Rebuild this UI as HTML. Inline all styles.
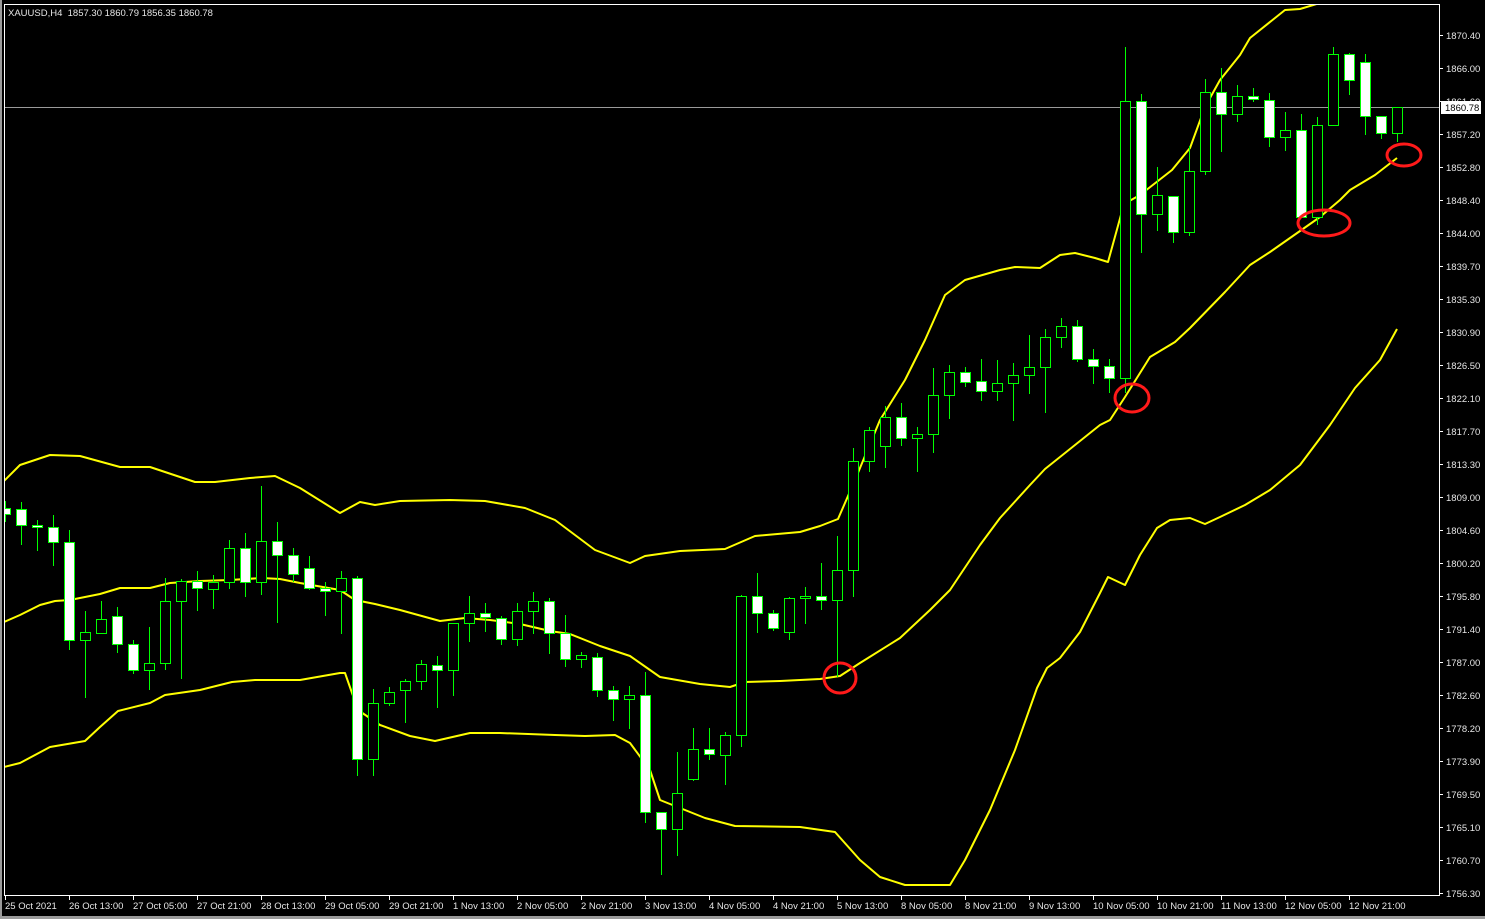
<!DOCTYPE html>
<html><head><meta charset="utf-8"><style>
html,body{margin:0;padding:0;background:#000;width:1485px;height:919px;overflow:hidden}
svg{display:block}
text{font-family:"Liberation Sans",sans-serif;font-size:9.5px;fill:#e6e6e6}
.w{fill:#fff;stroke:#00ff00;stroke-width:1}
.h{fill:#000;stroke:#00ff00;stroke-width:1}
</style></head><body>
<svg width="1485" height="919" viewBox="0 0 1485 919" xmlns="http://www.w3.org/2000/svg">
<rect x="0" y="0" width="1485" height="919" fill="#000"/>
<rect x="0" y="0" width="2" height="919" fill="#9a9a9a"/>
<rect x="0" y="916" width="1485" height="3" fill="#9a9a9a"/>
<defs><clipPath id="c"><rect x="5" y="5" width="1434" height="890"/></clipPath></defs>
<g clip-path="url(#c)">
<line x1="4" y1="107.5" x2="1439" y2="107.5" stroke="#9a9a9a" stroke-width="1"/>
<g fill="none" stroke="#ffff00" stroke-width="2" stroke-linejoin="round">
<polyline points="4,481 20,465 50,455 80,456 120,467 150,467 195,482 215,482 250,478 275,476 300,488 340,513 360,502 375,505 400,501 450,500 485,501 525,508 555,520 595,550 630,563 645,556 680,551 725,549 755,536 800,532 820,526 838,519 855,480 880,420 905,380 925,340 945,295 965,280 1000,270 1015,267 1040,268 1060,255 1075,253 1095,258 1108,262 1124,204 1140,195 1172,170 1190,148 1205,107 1220,80 1240,55 1250,38 1285,10 1300,9 1320,3"/>
<polyline points="4,622 20,615 40,605 55,601 70,600 100,594 120,588 150,588 170,583 200,581 230,580 262,578 280,579 300,583 340,590 355,600 375,604 400,610 440,621 465,618 490,620 520,624 550,631 570,634 600,646 630,656 660,677 700,684 730,687 745,682 780,681 820,679 840,676 860,663 900,638 930,610 950,590 980,545 1000,518 1030,485 1045,469 1075,445 1100,425 1110,420 1125,397 1150,357 1175,342 1190,328 1225,292 1250,265 1270,252 1300,231 1320,217 1340,200 1350,190 1375,175 1397,158"/>
<polyline points="4,767 20,763 50,747 85,741 100,727 118,711 150,703 165,695 200,690 232,682 255,680 300,680 340,673 345,673 358,710 380,725 410,736 435,741 470,733 500,733 555,735 585,736 615,735 630,743 650,770 660,800 670,804 705,818 735,826 800,827 835,832 860,860 880,877 905,885 950,885 965,860 990,810 1015,750 1037,688 1047,668 1060,658 1080,632 1100,593 1108,577 1125,585 1140,555 1157,528 1170,520 1190,518 1205,524 1220,517 1245,505 1270,490 1300,465 1330,425 1355,388 1380,360 1397,329"/>
</g>
<path stroke="#00ff00" stroke-width="1" fill="none" d="M5.5 501V522M21.5 502V545M37.5 520V551M53.5 515V566M69.5 530V650M85.5 611V698M101.5 601V633M117.5 607V653M133.5 640V674M149.5 627V690M165.5 578V670M181.5 579V679M197.5 571V611M213.5 575V609M229.5 540V589M245.5 533V597M261.5 486V595M277.5 522V623M293.5 548V582M309.5 556V590M325.5 582V616M341.5 571V634M357.5 576V776M373.5 689V776M389.5 687V706M405.5 679V723M421.5 660V690M437.5 656V708M453.5 623V696M469.5 596V642M485.5 603V632M501.5 616V645M517.5 603V646M533.5 592V634M549.5 598V654M565.5 615V667M581.5 652V668M597.5 653V697M613.5 686V721M629.5 686V729M645.5 672V823M661.5 812V875M677.5 752V856M693.5 728V781M709.5 728V760M725.5 732V785M741.5 595V747M757.5 573V633M773.5 610V631M789.5 597V640M805.5 587V624M821.5 563V610M837.5 536V677M853.5 448V597M869.5 427V472M885.5 406V468M901.5 403V446M917.5 427V472M933.5 368V453M949.5 365V419M965.5 367V387M981.5 359V401M997.5 360V401M1013.5 363V421M1029.5 335V394M1045.5 329V413M1061.5 318V348M1077.5 320V362M1093.5 349V384M1109.5 359V393M1125.5 47V393M1141.5 94V253M1157.5 167V231M1173.5 196V243M1189.5 146V236M1205.5 79V175M1221.5 68V152M1237.5 85V122M1253.5 88V102M1269.5 93V147M1285.5 112V151M1301.5 114V217M1317.5 117V225M1333.5 47V125M1349.5 53V95M1365.5 54V135M1381.5 116V139M1397.5 107V142"/>
<rect class="w" x="0.5" y="508.5" width="10" height="6"/>
<rect class="w" x="16.5" y="509.5" width="10" height="16"/>
<rect class="w" x="32.5" y="525.5" width="10" height="2"/>
<rect class="w" x="48.5" y="527.5" width="10" height="15"/>
<rect class="w" x="64.5" y="542.5" width="10" height="98"/>
<rect class="h" x="80.5" y="632.5" width="10" height="8"/>
<rect class="h" x="96.5" y="619.5" width="10" height="14"/>
<rect class="w" x="112.5" y="616.5" width="10" height="28"/>
<rect class="w" x="128.5" y="644.5" width="10" height="26"/>
<rect class="h" x="144.5" y="663.5" width="10" height="7"/>
<rect class="h" x="160.5" y="601.5" width="10" height="62"/>
<rect class="h" x="176.5" y="581.5" width="10" height="20"/>
<rect class="w" x="192.5" y="581.5" width="10" height="7"/>
<rect class="h" x="208.5" y="582.5" width="10" height="7"/>
<rect class="h" x="224.5" y="548.5" width="10" height="34"/>
<rect class="w" x="240.5" y="548.5" width="10" height="34"/>
<rect class="h" x="256.5" y="541.5" width="10" height="41"/>
<rect class="w" x="272.5" y="541.5" width="10" height="14"/>
<rect class="w" x="288.5" y="555.5" width="10" height="19"/>
<rect class="w" x="304.5" y="568.5" width="10" height="20"/>
<rect class="w" x="320.5" y="588.5" width="10" height="3"/>
<rect class="h" x="336.5" y="578.5" width="10" height="13"/>
<rect class="w" x="352.5" y="578.5" width="10" height="181"/>
<rect class="h" x="368.5" y="703.5" width="10" height="56"/>
<rect class="h" x="384.5" y="692.5" width="10" height="11"/>
<rect class="h" x="400.5" y="681.5" width="10" height="9"/>
<rect class="h" x="416.5" y="664.5" width="10" height="17"/>
<rect class="w" x="432.5" y="665.5" width="10" height="5"/>
<rect class="h" x="448.5" y="623.5" width="10" height="47"/>
<rect class="h" x="464.5" y="613.5" width="10" height="10"/>
<rect class="w" x="480.5" y="613.5" width="10" height="4"/>
<rect class="w" x="496.5" y="618.5" width="10" height="21"/>
<rect class="h" x="512.5" y="611.5" width="10" height="28"/>
<rect class="h" x="528.5" y="601.5" width="10" height="10"/>
<rect class="w" x="544.5" y="601.5" width="10" height="32"/>
<rect class="w" x="560.5" y="633.5" width="10" height="26"/>
<rect class="h" x="576.5" y="655.5" width="10" height="4"/>
<rect class="w" x="592.5" y="657.5" width="10" height="33"/>
<rect class="w" x="608.5" y="690.5" width="10" height="9"/>
<rect class="h" x="624.5" y="695.5" width="10" height="4"/>
<rect class="w" x="640.5" y="695.5" width="10" height="117"/>
<rect class="w" x="656.5" y="812.5" width="10" height="17"/>
<rect class="h" x="672.5" y="793.5" width="10" height="36"/>
<rect class="h" x="688.5" y="749.5" width="10" height="30"/>
<rect class="w" x="704.5" y="749.5" width="10" height="5"/>
<rect class="h" x="720.5" y="735.5" width="10" height="20"/>
<rect class="h" x="736.5" y="596.5" width="10" height="139"/>
<rect class="w" x="752.5" y="596.5" width="10" height="17"/>
<rect class="w" x="768.5" y="613.5" width="10" height="15"/>
<rect class="h" x="784.5" y="598.5" width="10" height="34"/>
<rect class="h" x="800.5" y="596.5" width="10" height="2"/>
<rect class="w" x="816.5" y="596.5" width="10" height="4"/>
<rect class="h" x="832.5" y="570.5" width="10" height="30"/>
<rect class="h" x="848.5" y="461.5" width="10" height="109"/>
<rect class="h" x="864.5" y="430.5" width="10" height="31"/>
<rect class="h" x="880.5" y="417.5" width="10" height="29"/>
<rect class="w" x="896.5" y="417.5" width="10" height="21"/>
<rect class="h" x="912.5" y="434.5" width="10" height="4"/>
<rect class="h" x="928.5" y="395.5" width="10" height="39"/>
<rect class="h" x="944.5" y="372.5" width="10" height="23"/>
<rect class="w" x="960.5" y="372.5" width="10" height="10"/>
<rect class="w" x="976.5" y="381.5" width="10" height="10"/>
<rect class="h" x="992.5" y="383.5" width="10" height="8"/>
<rect class="h" x="1008.5" y="375.5" width="10" height="8"/>
<rect class="h" x="1024.5" y="367.5" width="10" height="8"/>
<rect class="h" x="1040.5" y="337.5" width="10" height="30"/>
<rect class="h" x="1056.5" y="326.5" width="10" height="11"/>
<rect class="w" x="1072.5" y="326.5" width="10" height="33"/>
<rect class="w" x="1088.5" y="359.5" width="10" height="7"/>
<rect class="w" x="1104.5" y="366.5" width="10" height="12"/>
<rect class="h" x="1120.5" y="101.5" width="10" height="277"/>
<rect class="w" x="1136.5" y="101.5" width="10" height="113"/>
<rect class="h" x="1152.5" y="195.5" width="10" height="19"/>
<rect class="w" x="1168.5" y="196.5" width="10" height="36"/>
<rect class="h" x="1184.5" y="171.5" width="10" height="61"/>
<rect class="h" x="1200.5" y="92.5" width="10" height="79"/>
<rect class="w" x="1216.5" y="92.5" width="10" height="22"/>
<rect class="h" x="1232.5" y="96.5" width="10" height="18"/>
<rect class="w" x="1248.5" y="96.5" width="10" height="3"/>
<rect class="w" x="1264.5" y="100.5" width="10" height="37"/>
<rect class="h" x="1280.5" y="130.5" width="10" height="7"/>
<rect class="w" x="1296.5" y="130.5" width="10" height="87"/>
<rect class="h" x="1312.5" y="125.5" width="10" height="92"/>
<rect class="h" x="1328.5" y="54.5" width="10" height="71"/>
<rect class="w" x="1344.5" y="54.5" width="10" height="26"/>
<rect class="w" x="1360.5" y="62.5" width="10" height="54"/>
<rect class="w" x="1376.5" y="116.5" width="10" height="17"/>
<rect class="h" x="1392.5" y="107.5" width="10" height="26"/>
<g fill="none" stroke="#ff1a1a" stroke-width="3">
<ellipse cx="840" cy="678" rx="16" ry="15"/>
<ellipse cx="1132" cy="398" rx="17" ry="14"/>
<ellipse cx="1324" cy="223" rx="26" ry="13"/>
<ellipse cx="1404" cy="155" rx="17" ry="11"/>
</g>
</g>
<rect x="4.5" y="4.5" width="1435" height="891" fill="none" stroke="#fff" stroke-width="1"/>
<text x="8" y="16">XAUUSD,H4&#160; 1857.30 1860.79 1856.35 1860.78</text>
<g stroke="#fff" stroke-width="1">
<path d="M1440 35.5h3M1440 68.5h3M1440 101.5h3M1440 134.5h3M1440 167.5h3M1440 200.5h3M1440 233.5h3M1440 266.5h3M1440 299.5h3M1440 332.5h3M1440 365.5h3M1440 398.5h3M1440 431.5h3M1440 464.5h3M1440 497.5h3M1440 530.5h3M1440 563.5h3M1440 596.5h3M1440 629.5h3M1440 662.5h3M1440 695.5h3M1440 728.5h3M1440 761.5h3M1440 794.5h3M1440 827.5h3M1440 860.5h3M1440 893.5h3"/>
<path d="M5.5 896v4M69.5 896v4M133.5 896v4M197.5 896v4M261.5 896v4M325.5 896v4M389.5 896v4M453.5 896v4M517.5 896v4M581.5 896v4M645.5 896v4M709.5 896v4M773.5 896v4M837.5 896v4M901.5 896v4M965.5 896v4M1029.5 896v4M1093.5 896v4M1157.5 896v4M1221.5 896v4M1285.5 896v4M1349.5 896v4"/>
</g>
<g>
<text x="1446" y="39">1870.40</text>
<text x="1446" y="72">1866.00</text>
<text x="1446" y="105">1861.60</text>
<text x="1446" y="138">1857.20</text>
<text x="1446" y="171">1852.80</text>
<text x="1446" y="204">1848.40</text>
<text x="1446" y="237">1844.00</text>
<text x="1446" y="270">1839.70</text>
<text x="1446" y="303">1835.30</text>
<text x="1446" y="336">1830.90</text>
<text x="1446" y="369">1826.50</text>
<text x="1446" y="402">1822.10</text>
<text x="1446" y="435">1817.70</text>
<text x="1446" y="468">1813.30</text>
<text x="1446" y="501">1809.00</text>
<text x="1446" y="534">1804.60</text>
<text x="1446" y="567">1800.20</text>
<text x="1446" y="600">1795.80</text>
<text x="1446" y="633">1791.40</text>
<text x="1446" y="666">1787.00</text>
<text x="1446" y="699">1782.60</text>
<text x="1446" y="732">1778.20</text>
<text x="1446" y="765">1773.90</text>
<text x="1446" y="798">1769.50</text>
<text x="1446" y="831">1765.10</text>
<text x="1446" y="864">1760.70</text>
<text x="1446" y="897">1756.30</text>
</g>
<rect x="1441" y="101" width="40" height="13" fill="#fff"/>
<text x="1445" y="111" style="fill:#000">1860.78</text>
<g>
<text x="5" y="909">25 Oct 2021</text>
<text x="69" y="909">26 Oct 13:00</text>
<text x="133" y="909">27 Oct 05:00</text>
<text x="197" y="909">27 Oct 21:00</text>
<text x="261" y="909">28 Oct 13:00</text>
<text x="325" y="909">29 Oct 05:00</text>
<text x="389" y="909">29 Oct 21:00</text>
<text x="453" y="909">1 Nov 13:00</text>
<text x="517" y="909">2 Nov 05:00</text>
<text x="581" y="909">2 Nov 21:00</text>
<text x="645" y="909">3 Nov 13:00</text>
<text x="709" y="909">4 Nov 05:00</text>
<text x="773" y="909">4 Nov 21:00</text>
<text x="837" y="909">5 Nov 13:00</text>
<text x="901" y="909">8 Nov 05:00</text>
<text x="965" y="909">8 Nov 21:00</text>
<text x="1029" y="909">9 Nov 13:00</text>
<text x="1093" y="909">10 Nov 05:00</text>
<text x="1157" y="909">10 Nov 21:00</text>
<text x="1221" y="909">11 Nov 13:00</text>
<text x="1285" y="909">12 Nov 05:00</text>
<text x="1349" y="909">12 Nov 21:00</text>
</g>
</svg>
</body></html>
